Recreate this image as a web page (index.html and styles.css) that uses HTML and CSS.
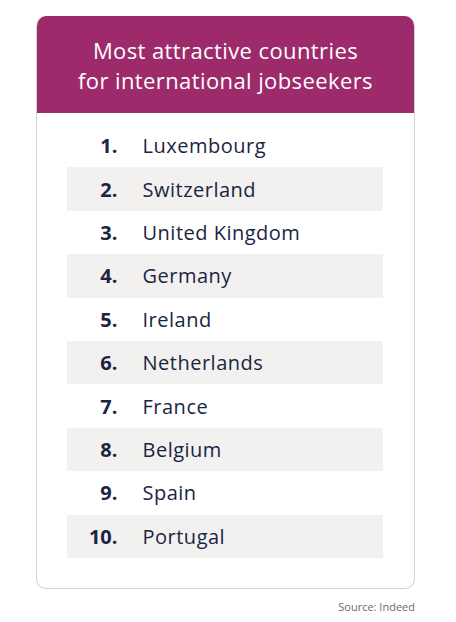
FILE: index.html
```html
<!DOCTYPE html>
<html lang="en">
<head>
<meta charset="utf-8">
<title>Most attractive countries for international jobseekers</title>
<link rel="stylesheet" href="styles.css">
</head>
<body>
<div class="page">
  <div class="card">
    <div class="card-header">
      <h1 class="title">Most attractive countries<br>for international jobseekers</h1>
    </div>
    <ol class="list">
      <li class="row"><span class="num">1.</span><span class="name">Luxembourg</span></li>
      <li class="row alt"><span class="num">2.</span><span class="name">Switzerland</span></li>
      <li class="row"><span class="num">3.</span><span class="name">United Kingdom</span></li>
      <li class="row alt"><span class="num">4.</span><span class="name">Germany</span></li>
      <li class="row"><span class="num">5.</span><span class="name">Ireland</span></li>
      <li class="row alt"><span class="num">6.</span><span class="name">Netherlands</span></li>
      <li class="row"><span class="num">7.</span><span class="name">France</span></li>
      <li class="row alt"><span class="num">8.</span><span class="name">Belgium</span></li>
      <li class="row"><span class="num">9.</span><span class="name">Spain</span></li>
      <li class="row alt"><span class="num">10.</span><span class="name">Portugal</span></li>
    </ol>
  </div>
  <p class="source">Source: Indeed</p>
</div>
</body>
</html>
```

FILE: styles.css
```css
html, body {
  margin: 0;
  padding: 0;
  background: #ffffff;
}

.page {
  padding: 16px 0 0 36px;
  width: 379px;
  font-family: "Open Sans", "Liberation Sans", sans-serif;
}

.card {
  box-sizing: border-box;
  width: 379px;
  height: 573px;
  border: 1.5px solid #d2d2d2;
  border-top: none;
  border-radius: 10px;
  overflow: hidden;
  background: #ffffff;
}

.card-header {
  height: 97px;
  background: #9d2a6b;
  display: flex;
  align-items: center;
  justify-content: center;
  margin: 0 -1.5px;
}

.title {
  margin: 0;
  color: #ffffff;
  font-size: 22px;
  font-weight: 400;
  line-height: 30px;
  text-align: center;
  letter-spacing: 0.4px;
}

.list {
  list-style: none;
  margin: 11px 31px 0 29.5px;
  padding: 0;
}

.row {
  height: 43.4px;
  display: flex;
  align-items: center;
  color: #1b2542;
  font-size: 20px;
  font-weight: 500;
}

.row.alt {
  background: #f2f1f0;
}

.num {
  width: 51px;
  text-align: right;
  font-weight: 700;
}

.name {
  margin-left: 25px;
  letter-spacing: 0.5px;
}

.source {
  margin: 10px 0 0 0;
  text-align: right;
  font-size: 11px;
  color: #6b6b6b;
}
```
